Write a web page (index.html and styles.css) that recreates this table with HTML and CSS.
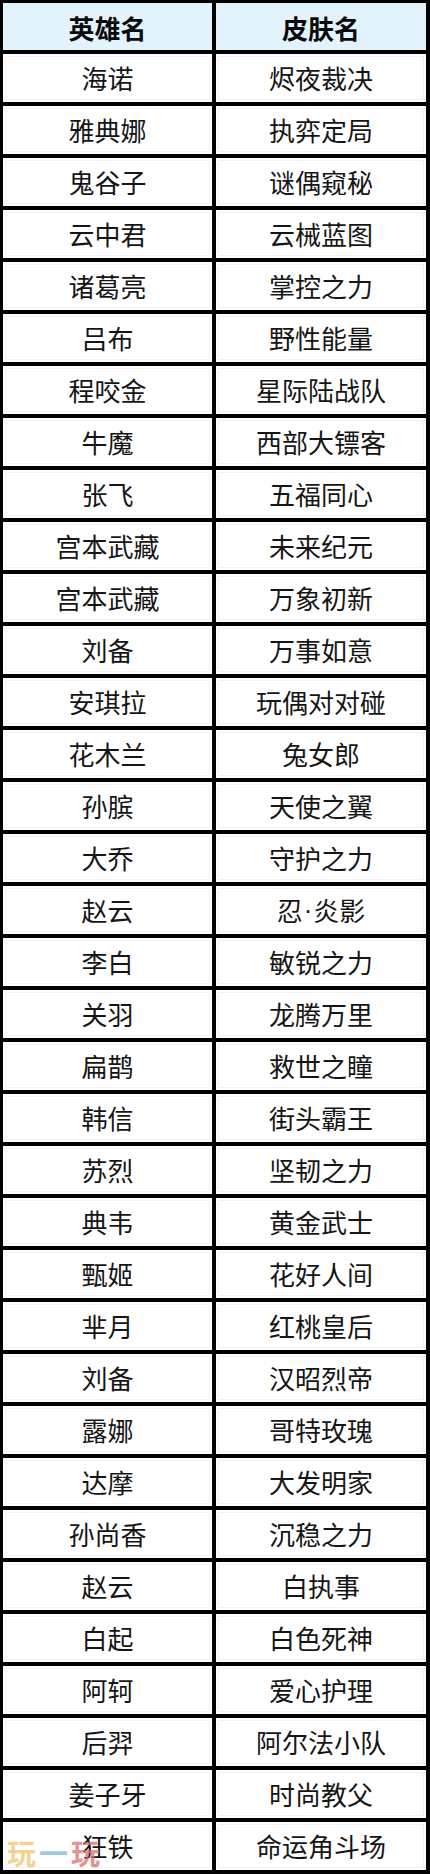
FILE: index.html
```html
<!DOCTYPE html>
<html lang="zh-CN">
<head>
<meta charset="utf-8">
<title>皮肤表</title>
<link rel="stylesheet" href="styles.css">
</head>
<body>
<div class="sheet">
  <div class="cell head">英雄名</div><div class="cell head">皮肤名</div>
  <div class="cell">海诺</div><div class="cell">烬夜裁决</div>
  <div class="cell">雅典娜</div><div class="cell">执弈定局</div>
  <div class="cell">鬼谷子</div><div class="cell">谜偶窥秘</div>
  <div class="cell">云中君</div><div class="cell">云械蓝图</div>
  <div class="cell">诸葛亮</div><div class="cell">掌控之力</div>
  <div class="cell">吕布</div><div class="cell">野性能量</div>
  <div class="cell">程咬金</div><div class="cell">星际陆战队</div>
  <div class="cell">牛魔</div><div class="cell">西部大镖客</div>
  <div class="cell">张飞</div><div class="cell">五福同心</div>
  <div class="cell">宫本武藏</div><div class="cell">未来纪元</div>
  <div class="cell">宫本武藏</div><div class="cell">万象初新</div>
  <div class="cell">刘备</div><div class="cell">万事如意</div>
  <div class="cell">安琪拉</div><div class="cell">玩偶对对碰</div>
  <div class="cell">花木兰</div><div class="cell">兔女郎</div>
  <div class="cell">孙膑</div><div class="cell">天使之翼</div>
  <div class="cell">大乔</div><div class="cell">守护之力</div>
  <div class="cell">赵云</div><div class="cell">忍<span class="dot">·</span>炎影</div>
  <div class="cell">李白</div><div class="cell">敏锐之力</div>
  <div class="cell">关羽</div><div class="cell">龙腾万里</div>
  <div class="cell">扁鹊</div><div class="cell">救世之瞳</div>
  <div class="cell">韩信</div><div class="cell">街头霸王</div>
  <div class="cell">苏烈</div><div class="cell">坚韧之力</div>
  <div class="cell">典韦</div><div class="cell">黄金武士</div>
  <div class="cell">甄姬</div><div class="cell">花好人间</div>
  <div class="cell">芈月</div><div class="cell">红桃皇后</div>
  <div class="cell">刘备</div><div class="cell">汉昭烈帝</div>
  <div class="cell">露娜</div><div class="cell">哥特玫瑰</div>
  <div class="cell">达摩</div><div class="cell">大发明家</div>
  <div class="cell">孙尚香</div><div class="cell">沉稳之力</div>
  <div class="cell">赵云</div><div class="cell">白执事</div>
  <div class="cell">白起</div><div class="cell">白色死神</div>
  <div class="cell">阿轲</div><div class="cell">爱心护理</div>
  <div class="cell">后羿</div><div class="cell">阿尔法小队</div>
  <div class="cell">姜子牙</div><div class="cell">时尚教父</div>
  <div class="cell">狂铁</div><div class="cell">命运角斗场</div>
  <div class="watermark"><span class="wm-a">玩</span><span class="wm-b">一</span><span class="wm-c">玩</span></div>
</div>
</body>
</html>
```
FILE: styles.css
```css
html, body {
  margin: 0;
  padding: 0;
  background: #ffffff;
}

.sheet {
  position: relative;
  width: 430px;
  box-sizing: border-box;
  display: grid;
  grid-template-columns: 209px 210px;
  grid-template-rows: 47px;
  grid-auto-rows: 48px;
  column-gap: 4px;
  row-gap: 4px;
  padding: 3px 4px 4px 3px;
  background: #000000;
  font-family: "Noto Sans CJK SC", "Noto Sans", sans-serif;
}

.cell {
  background: #ffffff;
  color: #151515;
  font-size: 26px;
  font-weight: 400;
  display: flex;
  align-items: center;
  justify-content: center;
  line-height: 1;
  outline: 1px solid #f1f1f1;
  outline-offset: -3px;
}

.cell.head {
  background: #e3f3fd;
  color: #0a0a0a;
  font-weight: 700;
  padding-top: 3px;
  outline: none;
}

.dot {
  font-family: "Liberation Sans", sans-serif;
  padding: 0 1px;
}

.watermark {
  position: absolute;
  left: 7px;
  bottom: 7px;
  display: flex;
  gap: 3px;
  font-family: "Noto Sans CJK SC", sans-serif;
  font-weight: 700;
  font-size: 29px;
  line-height: 1;
  opacity: 0.75;
  pointer-events: none;
}

.wm-a { color: #edc66a; }
.wm-b { color: #7fb8dc; }
.wm-c { color: #dc7070; }
```
